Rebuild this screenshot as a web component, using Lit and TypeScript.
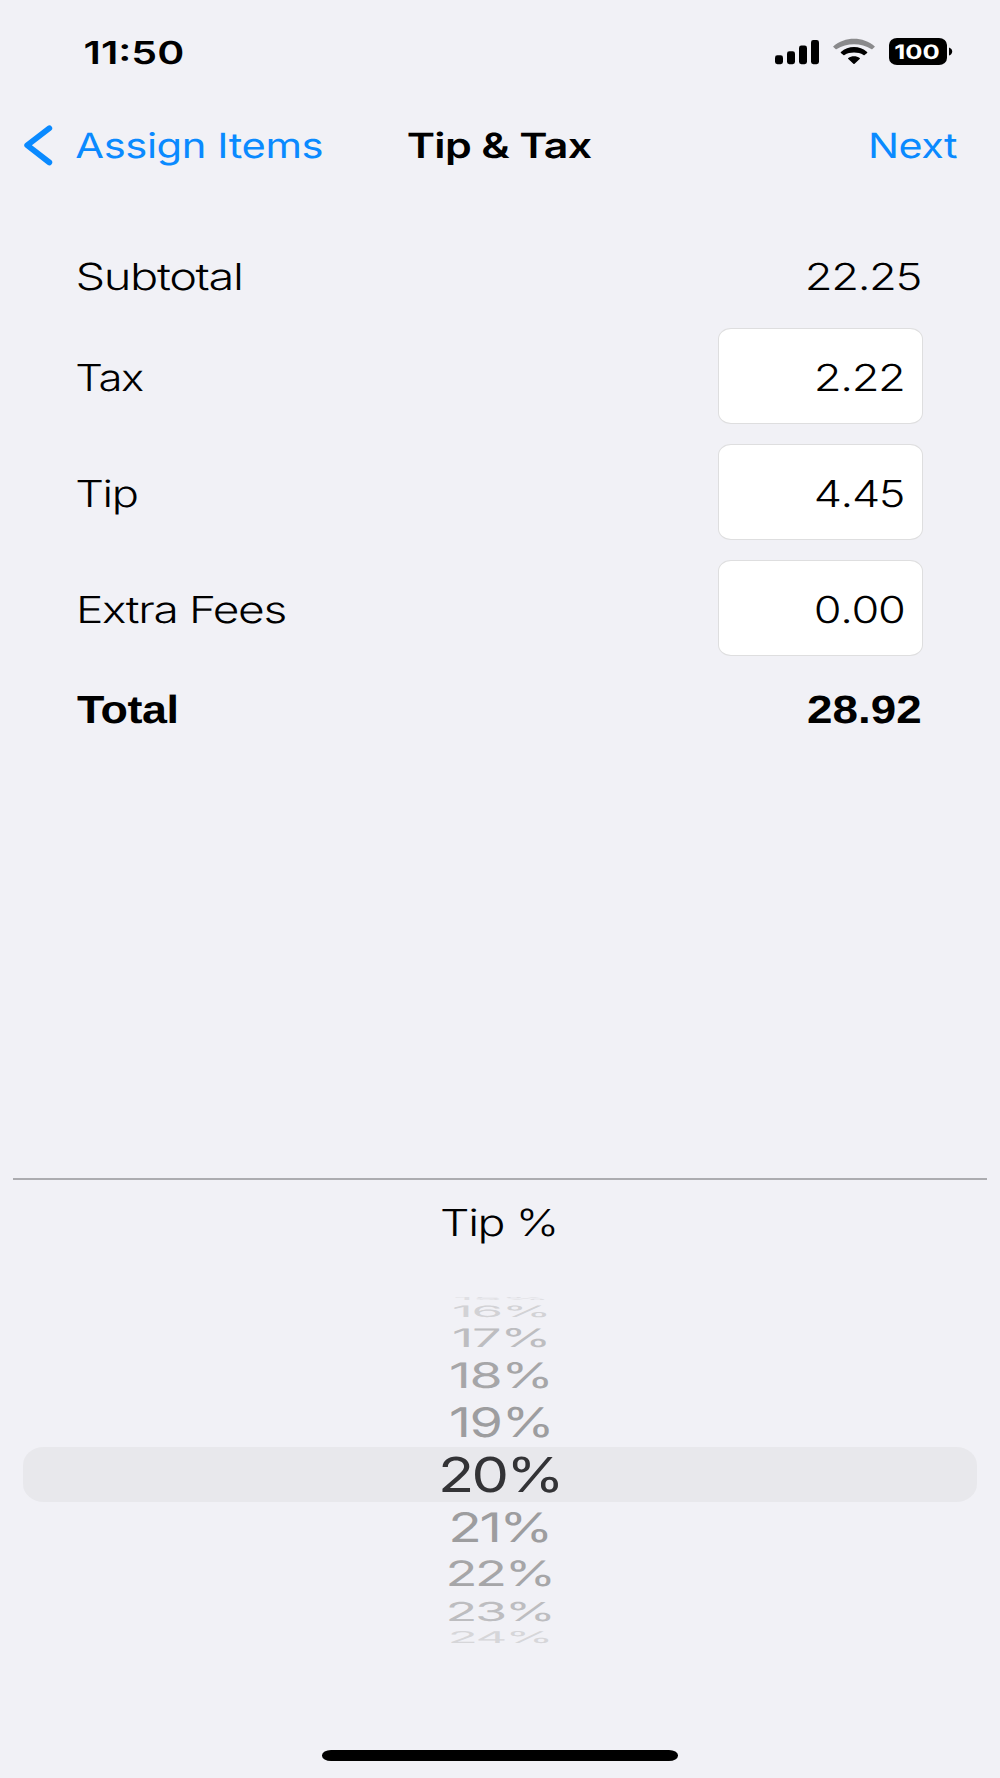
import { LitElement, html, svg, css } from "lit";
import { customElement, property } from "lit/decorators.js";

type Face = "ui" | "form" | "strong";

interface FaceSpec {
  family: string;
  cap: number;
}

const INTER: FaceSpec = { family: 'Inter, "Liberation Sans", sans-serif', cap: 0.727 };
const SANS: FaceSpec = { family: '"Liberation Sans", Arial, sans-serif', cap: 0.688 };
const FACES: Record<Face, FaceSpec> = { ui: INTER, form: INTER, strong: SANS };

/** Room left on each side of the ink for antialiasing. */
const EDGE = 0.4;

const pen = document.createElement("canvas").getContext("2d")! as any;

/** Extended-width text: the drawn glyphs fill exactly `w` by `cap` pixels. */
@customElement("wide-text")
export class WideText extends LitElement {
  static styles = css`
    :host { display: block; flex: none; }
    .canvas { display: block; overflow: visible; }
    .label { fill: currentColor; text-rendering: geometricPrecision; white-space: pre; }
    .even { font-kerning: none; }
  `;
  @property() text = "";
  @property() face: Face = "ui";
  @property({ type: Number }) w = 100;
  @property({ type: Number }) cap = 20;
  @property({ type: Number }) weight = 400;
  /** Letter spacing, in em. */
  @property({ type: Number }) track = 0;
  /** Turns pair kerning off. */
  @property({ type: Boolean }) even = false;

  render() {
    const spec = FACES[this.face];
    const size = this.cap / spec.cap;
    pen.font = `${this.weight} 200px ${spec.family}`;
    pen.textRendering = "geometricPrecision";
    pen.fontKerning = this.even ? "none" : "auto";
    pen.letterSpacing = `${this.track * 200}px`;
    const m = pen.measureText(this.text);
    const f = size / 200;
    const left = -m.actualBoundingBoxLeft * f;
    const right = m.actualBoundingBoxRight * f;
    const k = (this.w - 2 * EDGE) / (right - left);
    return html`<svg class="canvas" width=${this.w} height=${this.cap}>
      ${svg`<text class=${this.even ? "label even" : "label"} font-family=${spec.family} font-size=${size}
        font-weight=${this.weight} letter-spacing=${this.track * size}
        transform="translate(${EDGE - left * k} ${this.cap}) scale(${k} 1)">${this.text}</text>`}
    </svg>`;
  }
}

@customElement("status-bar")
export class StatusBar extends LitElement {
  static styles = css`
    :host { display: flex; justify-content: space-between; align-items: flex-start; height: 66px;
      padding: 38px 47px 0 84.6px; box-sizing: border-box; color: #000; }
    .time { margin-top: 3px; }
    .icons { display: flex; align-items: flex-start; }
    .wifi { margin-left: 14px; }
    .battery { display: flex; align-items: center; margin-left: 14px; }
    .cell { width: 58px; height: 27px; border-radius: 8px / 7px; background: #000; color: #fff;
      display: flex; align-items: center; justify-content: center; padding: 1px 3px 0 0; box-sizing: border-box; }
  `;
  render() {
    return html`
      <wide-text class="time" text="11:50" w="97.6" cap="23" weight="600" even></wide-text>
      <div class="icons">
        <svg width="44" height="27" viewBox="0 0 44 27">
          <rect x="0" y="17.3" width="8" height="8.9" rx="2.4"></rect>
          <rect x="12" y="13.2" width="8" height="13" rx="2.4"></rect>
          <rect x="24" y="7.5" width="8" height="18.7" rx="2.4"></rect>
          <rect x="36" y="2" width="8" height="24.2" rx="2.4"></rect>
        </svg>
        <svg class="wifi" width="42" height="27" viewBox="0 0 42 27">
          <path fill="#8a8a8c" d="M0.4 8.2C11.5-1.8 30.5-1.8 41.6 8.2Q42 8.7 41.6 9.1L39.2 11.2Q38.7 11.5 38.2 11.1C28.5 4.6 13.5 4.6 3.8 11.1Q3.3 11.5 2.8 11.2L0.4 9.1Q0 8.7 0.4 8.2Z"></path>
          <path d="M7.9 14.1C15.3 7.4 26.7 7.4 34.1 14.1Q34.6 14.6 34.1 15L31.6 17.1Q31.1 17.5 30.5 17C25 13.8 17 13.8 11.5 17Q10.9 17.5 10.4 17.1L7.9 15Q7.4 14.6 7.9 14.1Z"></path>
          <path d="M15.3 20.1C18.5 17.5 23.5 17.5 26.7 20.1Q27.3 20.6 26.7 21.1L21.6 25.7Q21 26.2 20.4 25.7L15.3 21.1Q14.7 20.6 15.3 20.1Z"></path>
        </svg>
        <div class="battery">
          <div class="cell"><wide-text text="100" w="44" cap="14.4" weight="700" even></wide-text></div>
          <svg width="6" height="9" viewBox="0 0 6 9"><path d="M2 0.4C4 1 5.2 2.6 5.2 4.5S4 8 2 8.6Z"></path></svg>
        </div>
      </div>`;
  }
}

@customElement("nav-bar")
export class NavBar extends LitElement {
  static styles = css`
    :host { display: flex; align-items: flex-start; height: 72px; margin-top: 58px;
      padding: 0 43px 0 23px; box-sizing: border-box; color: #000; }
    .link { color: #0a8aff; }
    .back { margin: 9px 0 0 22.8px; }
    .title { margin: 9px 0 0 86.6px; }
    .next { margin: 9px 0 0 auto; }
  `;
  render() {
    return html`
      <svg class="link" width="30" height="42" viewBox="0 0 30 42" fill="none" stroke="currentColor"
        stroke-width="5.8" stroke-linecap="round" stroke-linejoin="round">
        <path d="M26.3 4.2L4.2 21.3L26.3 38.4"></path>
      </svg>
      <wide-text class="link back" text="Assign Items" w="246" cap="25.2" track="-0.01"></wide-text>
      <wide-text class="title" text="Tip &amp; Tax" w="183.6" cap="25.2" weight="600" track="-0.015"></wide-text>
      <wide-text class="link next" text="Next" w="86.3" cap="25.2" track="-0.01"></wide-text>`;
  }
}

interface Row {
  label: string;
  lw: number;
  inset: number;
  value: string;
  vw: number;
  kind: "plain" | "field" | "total";
}

const ROWS: Row[] = [
  { label: "Subtotal", lw: 162.4, inset: 1.4, value: "22.25", vw: 112, kind: "plain" },
  { label: "Tax", lw: 66.3, inset: 0, value: "2.22", vw: 86, kind: "field" },
  { label: "Tip", lw: 60, inset: 0, value: "4.45", vw: 87, kind: "field" },
  { label: "Extra Fees", lw: 205.3, inset: 2.6, value: "0.00", vw: 87.3, kind: "field" },
  { label: "Total", lw: 99.4, inset: 0.3, value: "28.92", vw: 112.4, kind: "total" },
];

@customElement("bill-form")
export class BillForm extends LitElement {
  static styles = css`
    :host { display: flex; flex-direction: column; gap: 20.3px; padding: 67.3px 77.3px 0 77px; color: #000; }
    .row { display: flex; justify-content: space-between; align-items: center; }
    .plain, .total { align-items: flex-start; padding-right: 2.6px; }
    .plain { height: 44.7px; }
    .total { padding-top: 19.4px; }
    .field { height: 95.7px; }
    .box { display: flex; align-items: center; justify-content: flex-end; width: 205px; height: 95.7px;
      box-sizing: border-box; padding: 3.2px 18.8px 0 0; background: #fff; border: 1.2px solid #dededf;
      border-radius: 13px / 11px; }
    .field > .name { margin-top: 3.2px; }
  `;
  private value(r: Row) {
    const total = r.kind === "total";
    return html`<wide-text text=${r.value} w=${r.vw} cap="27" face=${total ? "strong" : "form"}
      weight=${total ? 700 : 300} track=${total ? 0 : -0.03} even></wide-text>`;
  }
  render() {
    return ROWS.map((r) => {
      const total = r.kind === "total";
      return html`<div class="row ${r.kind}">
        <wide-text class="name" style="margin-left:${r.inset}px" text=${r.label} w=${r.lw} cap="27"
          face=${total ? "strong" : "form"} weight=${total ? 700 : 300}
          track=${total ? -0.01 : -0.03}></wide-text>
        ${r.kind === "field" ? html`<div class="box">${this.value(r)}</div>` : this.value(r)}
      </div>`;
    });
  }
}

interface Option {
  text: string;
  w: number;
  cap: number;
  gap: number;
  color: string;
}

const ABOVE: Option[] = [
  { text: "15%", w: 90, cap: 3, gap: 0, color: "#dfdfe3" },
  { text: "16%", w: 92.6, cap: 11.4, gap: 6, color: "#d2d2d5" },
  { text: "17%", w: 92, cap: 18.6, gap: 10.9, color: "#bdbdc0" },
  { text: "18%", w: 97.3, cap: 25.6, gap: 15.6, color: "#a6a6a8" },
  { text: "19%", w: 98, cap: 29.7, gap: 19.4, color: "#9d9d9f" },
];
const BELOW: Option[] = [
  { text: "21%", w: 95.7, cap: 29.6, gap: 9.5, color: "#9d9d9f" },
  { text: "22%", w: 101.7, cap: 25.4, gap: 19.9, color: "#a6a6a8" },
  { text: "23%", w: 101.7, cap: 18.9, gap: 15.8, color: "#bdbdc0" },
  { text: "24%", w: 97.5, cap: 11.8, gap: 10.4, color: "#d6d6d9" },
];

@customElement("tip-picker")
export class TipPicker extends LitElement {
  static styles = css`
    :host { display: flex; flex-direction: column; align-items: center; margin-top: auto; height: 601px;
      color: #000; }
    .rule { width: 974px; height: 2px; background: #acacb0; margin-top: 1px; }
    .heading { margin: 29.4px 3.8px 0 0; }
    .wheel { display: flex; flex-direction: column; align-items: center; width: 100%; margin-top: 60.6px; }
    .selected { display: flex; justify-content: center; width: 954px; height: 55px; margin-top: 9.9px;
      padding-top: 10px; box-sizing: border-box; border-radius: 21px / 18px; background: #e8e8ec;
      color: #333336; }
    .home { width: 356.6px; height: 10.6px; border-radius: 9px / 5.3px; background: #000; margin-top: 107px; }
  `;
  private option(o: Option) {
    const track = o.text.startsWith("1") ? -0.025 : -0.045;
    return html`<wide-text style="margin-top:${o.gap}px;color:${o.color}" text=${o.text} w=${o.w}
      cap=${o.cap} track=${track} even></wide-text>`;
  }
  render() {
    return html`
      <div class="rule"></div>
      <wide-text class="heading" text="Tip %" w="112.7" cap="27" face="form" weight="300" track="-0.03"></wide-text>
      <div class="wheel">
        ${ABOVE.map((o) => this.option(o))}
        <div class="selected"><wide-text text="20%" w="116.5" cap="35" track="-0.045" even></wide-text></div>
        ${BELOW.map((o) => this.option(o))}
      </div>
      <div class="home"></div>`;
  }
}

@customElement("app-root")
export class AppRoot extends LitElement {
  static styles = css`
    :host { display: block; }
    .screen { display: flex; flex-direction: column; width: 1000px; height: 1778px; overflow: hidden;
      background: #f1f1f6; }
  `;
  render() {
    return html`<main class="screen">
      <status-bar></status-bar>
      <nav-bar></nav-bar>
      <bill-form></bill-form>
      <tip-picker></tip-picker>
    </main>`;
  }
}
